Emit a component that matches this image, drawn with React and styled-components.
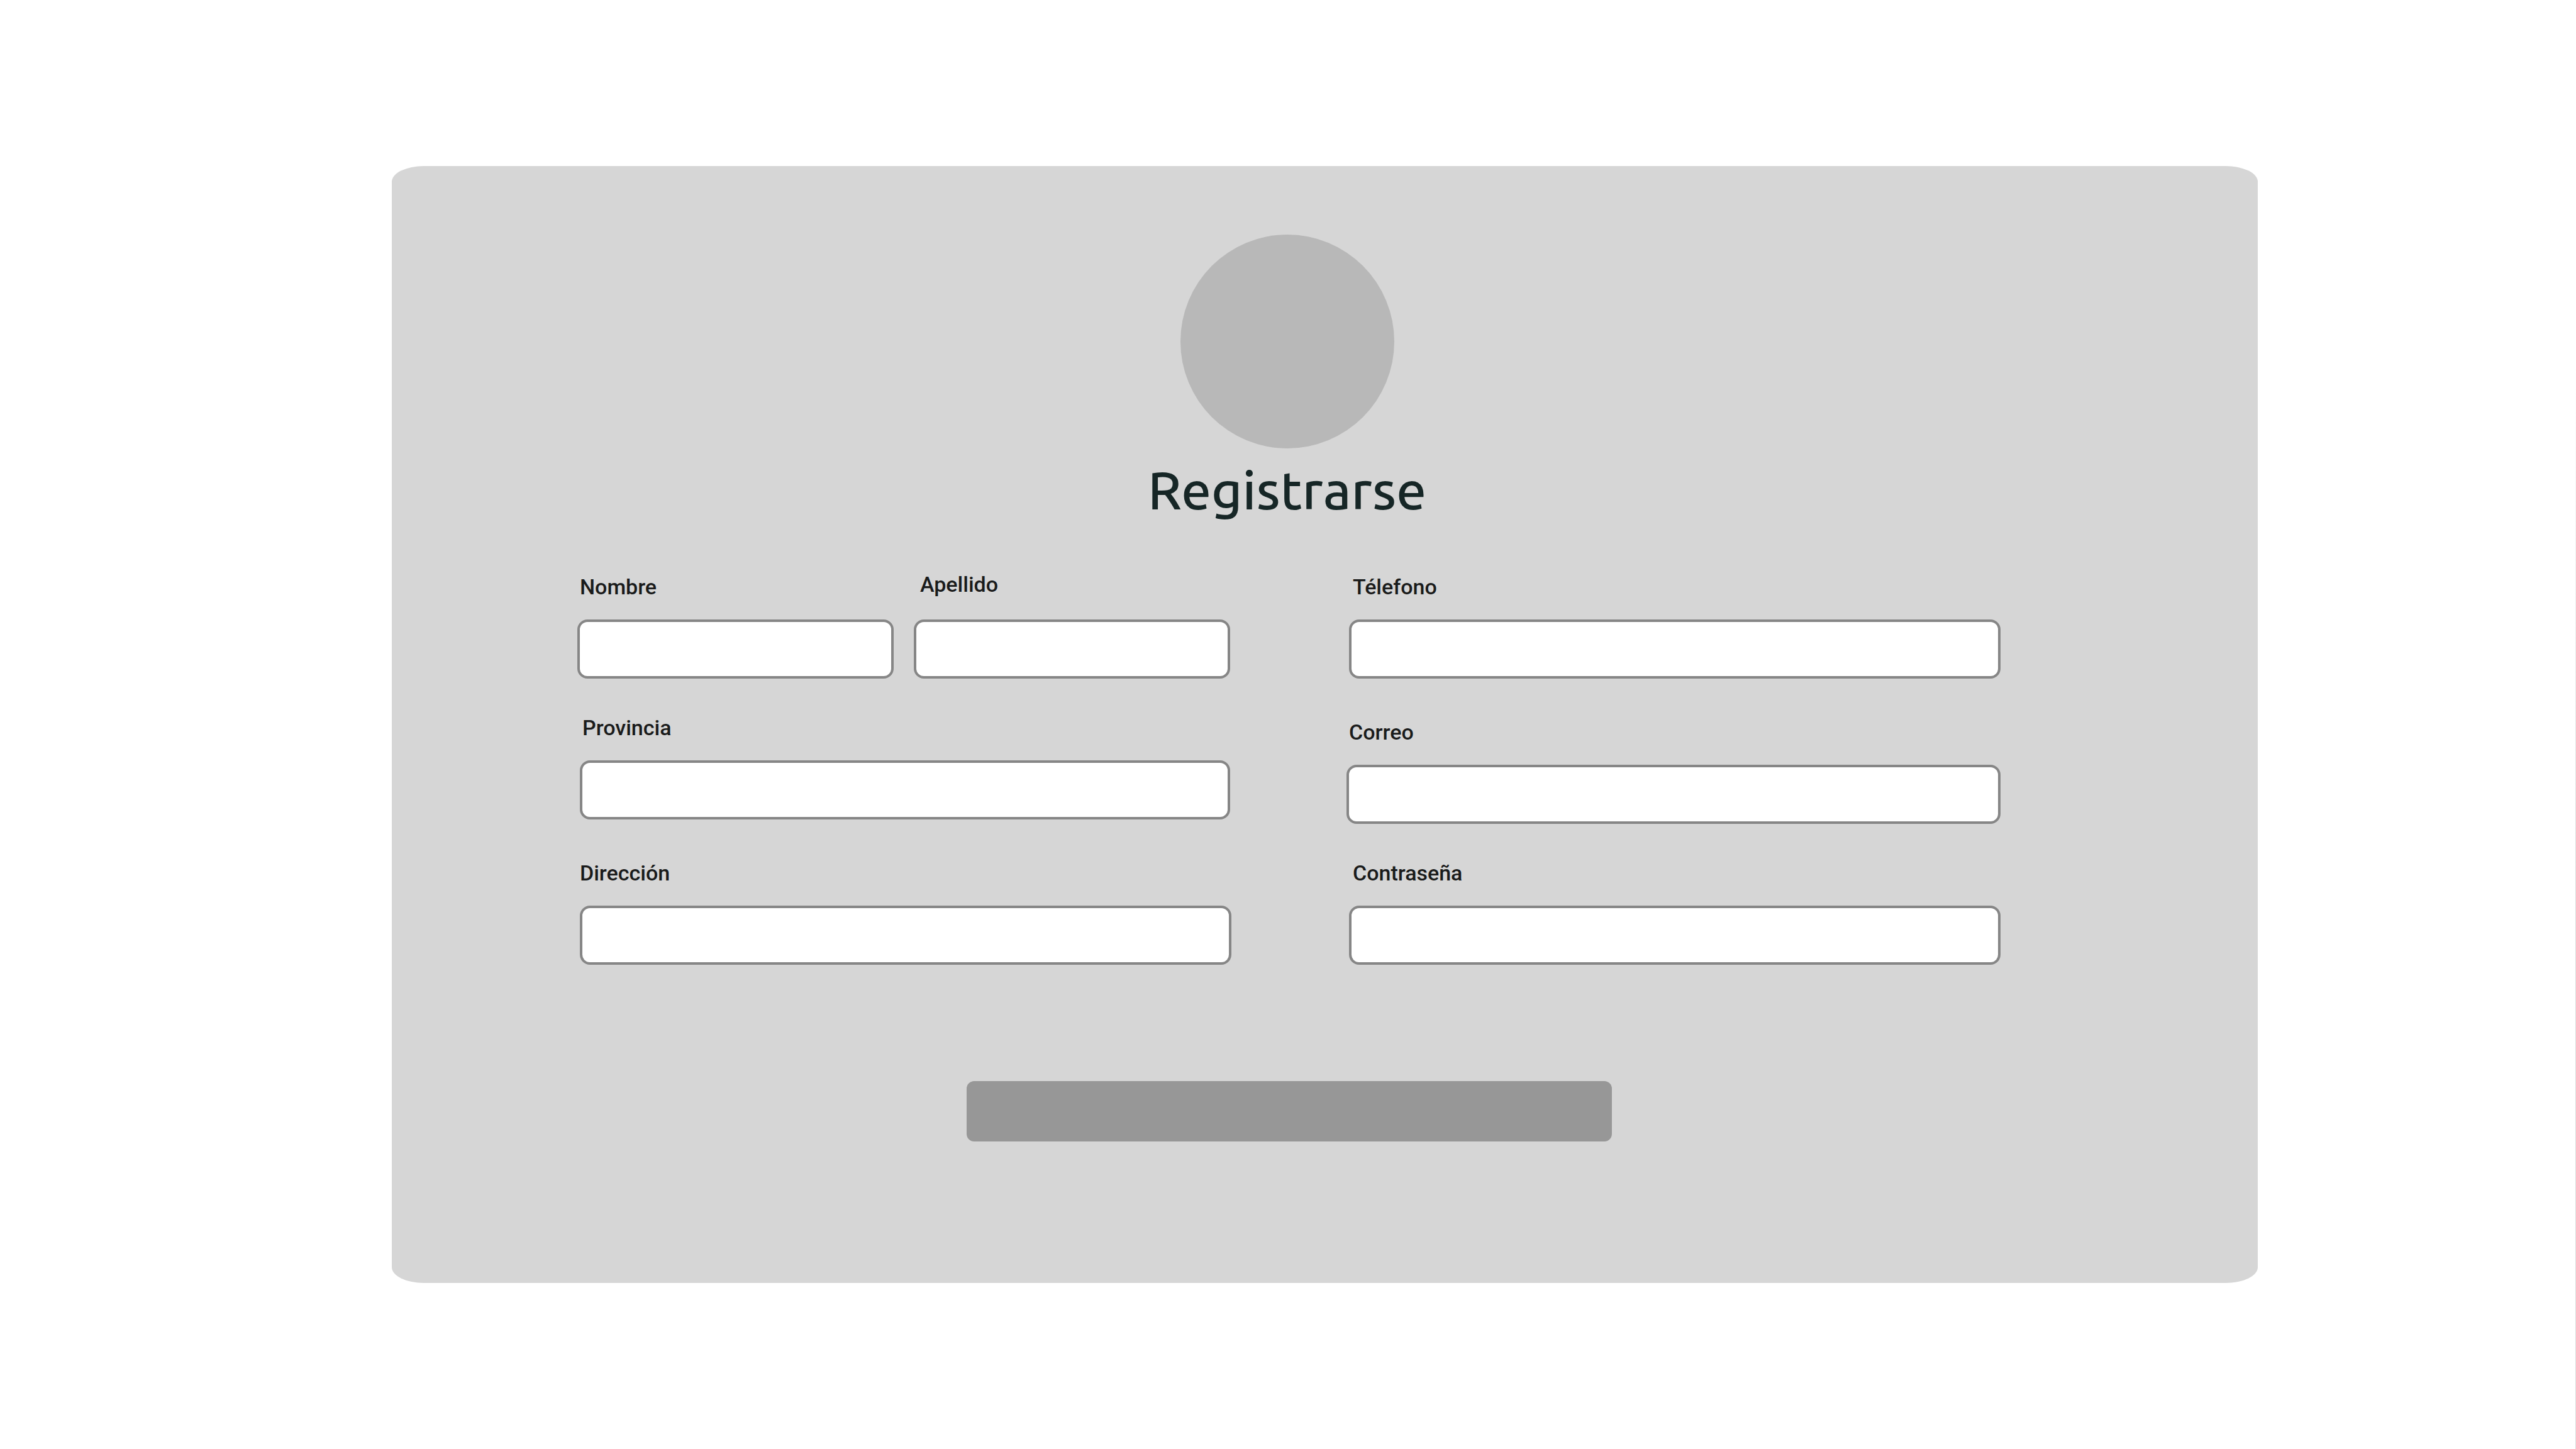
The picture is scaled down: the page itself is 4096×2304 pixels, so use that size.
import React from "react";
import styled, { createGlobalStyle } from "styled-components";

const GlobalStyle = createGlobalStyle`
  *, *::before, *::after { box-sizing: border-box; }
  body { margin: 0; background: #fff; }
`;

const Page = styled.main`
  min-height: 100vh;
  padding: 264px 506px 263px 623px;
  background: linear-gradient(to bottom, #fff 25%, #eee 38%, #dadada 60%) right top / 1px 100% no-repeat #fff;
  font-family: Roboto, "Liberation Sans", sans-serif;
`;

const Card = styled.section`
  padding: 109px 409px 225px 295px;
  border-radius: 51px / 25px;
  background: #d6d6d6;
`;

const Header = styled.header`
  display: flex;
  flex-direction: column;
  align-items: center;
  padding-right: 6px;
  margin-bottom: 66px;
`;

const Avatar = styled.div`
  width: 340px;
  height: 340px;
  border-radius: 50%;
  background: #b8b8b8;
`;

const Title = styled.h1`
  margin: 2px 0 0;
  color: #162626;
  font-family: Ubuntu, "Noto Sans", sans-serif;
  font-size: 85px;
  font-weight: 500;
  line-height: 128px;
`;

const Form = styled.form`
  display: flex;
  flex-direction: column;
  align-items: center;
  gap: 185px;
`;

const Columns = styled.div`
  display: grid;
  grid-template-columns: 1fr 1fr;
  gap: 183px;
  width: 100%;
`;

const Column = styled.div`
  display: flex;
  flex-direction: column;
  justify-content: flex-end;
`;

const NameRow = styled.div`
  display: grid;
  grid-template-columns: 1fr 1fr;
  align-items: end;
  gap: 32px;
  padding-right: 2px;
`;

const FieldBox = styled.div`
  display: flex;
  flex-direction: column;
  gap: ${({ $labelGap }) => $labelGap}px;
  margin-top: ${({ $space }) => $space}px;
  padding-left: ${({ $start }) => $start}px;
  padding-right: ${({ $end }) => $end}px;
`;

const Label = styled.label`
  padding-left: ${({ $indent }) => $indent}px;
  color: #1a1b1b;
  font-size: 34px;
  font-weight: 500;
  line-height: 40px;
`;

const Input = styled.input`
  width: 100%;
  height: 94px;
  padding: 0 24px;
  border: 4px solid #868686;
  border-radius: 16px;
  background: #fff;
  color: #1a1b1b;
  font: inherit;
  font-size: 34px;
`;

const Submit = styled.button`
  width: 1026px;
  max-width: 100%;
  height: 96px;
  border: 0;
  border-radius: 12px;
  background: #979797;
`;

const TIGHT = 58;
const LOOSE = 65;

function Field({ id, label, type = "text", space = 0, start = 0, end = 0, indent = 4, labelGap = 32 }) {
  return (
    <FieldBox $space={space} $start={start} $end={end} $labelGap={labelGap}>
      <Label htmlFor={id} $indent={indent}>{label}</Label>
      <Input id={id} name={id} type={type} />
    </FieldBox>
  );
}

export default function App() {
  return (
    <>
      <GlobalStyle />
      <Page>
        <Card>
          <Header>
            <Avatar />
            <Title>Registrarse</Title>
          </Header>
          <Form onSubmit={(event) => event.preventDefault()}>
            <Columns>
              <Column>
                <NameRow>
                  <Field id="nombre" label="Nombre" />
                  <Field id="apellido" label="Apellido" indent={10} labelGap={36} />
                </NameRow>
                <Field id="provincia" label="Provincia" space={TIGHT} start={4} end={2} />
                <Field id="direccion" label="Dirección" space={LOOSE} start={4} indent={0} />
              </Column>
              <Column>
                <Field id="telefono" label="Télefono" type="tel" start={4} indent={6} />
                <Field id="correo" label="Correo" type="email" space={LOOSE} />
                <Field id="contrasena" label="Contraseña" type="password" space={TIGHT} start={4} indent={6} />
              </Column>
            </Columns>
            <Submit type="submit" aria-label="Registrarse" />
          </Form>
        </Card>
      </Page>
    </>
  );
}
